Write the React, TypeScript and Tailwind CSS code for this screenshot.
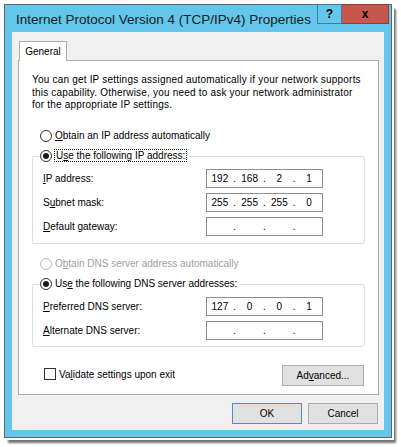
import React from "react";

const Radio = ({ checked, disabled }: { checked?: boolean; disabled?: boolean }) => (
  <span
    className={`flex items-center justify-center w-[12px] h-[12px] rounded-full border bg-white ${
      disabled ? "border-[#bcbcbc]" : "border-[#333333]"
    }`}
  >
    {checked && <span className="w-[6px] h-[6px] rounded-full bg-[#1a1a1a]" />}
  </span>
);

const IpBox = ({ parts }: { parts: string[] }) => (
  <div className="flex items-center w-[117px] h-[19px] border border-[#8f8f8f] bg-white text-[10px]">
    {parts.map((p, i) => (
      <React.Fragment key={i}>
        {i > 0 && <span className="w-[4px] text-center">.</span>}
        <span className="flex-1 text-center">{p}</span>
      </React.Fragment>
    ))}
  </div>
);

const Row = ({ label, parts }: { label: React.ReactNode; parts: string[] }) => (
  <div className="flex items-center">
    <span className="w-[173px] pl-[10px]">{label}</span>
    <IpBox parts={parts} />
  </div>
);

const Btn = ({ children, primary, w }: { children: React.ReactNode; primary?: boolean; w: string }) => (
  <div
    className={`flex items-center justify-center h-[21px] bg-[#e1e1e1] border ${w} ${
      primary ? "border-[#4a8ed0]" : "border-[#adadad]"
    }`}
  >
    {children}
  </div>
);

export default function App() {
  return (
    <div className="w-[401px] h-[447px] bg-white pt-[4px] pl-[4px] text-[10px] text-black font-['Liberation_Sans',Arial,sans-serif]">
      <div className="w-[388px] h-[434px] border border-[#5b6670] bg-[#63c6ea] flex flex-col px-[7px] pb-[7px] shadow-[0_0_0_2px_#ffffff,4px_5px_2px_rgba(0,0,0,0.55)]">
        {/* title bar */}
        <div className="h-[27px] flex items-start justify-between">
          <span className="mt-[5px] pl-[4px] text-[13.5px] leading-[20px] whitespace-nowrap text-[#1b1b1b]">
            Internet Protocol Version 4 (TCP/IPv4) Properties
          </span>
          <div className="flex -mt-[1px] -mr-[5px]">
            <div className="w-[25px] h-[20px] border border-[#3f7f9c] bg-[#63c6ea] flex items-center justify-center text-[12px] font-bold">
              ?
            </div>
            <div className="w-[47px] h-[20px] border border-[#9b3a33] border-l-0 bg-[#c7564c] flex items-center justify-center text-[12px] font-bold">
              x
            </div>
          </div>
        </div>

        {/* client area */}
        <div className="flex-1 bg-[#f0f0f0] pt-[9px] flex flex-col">
          <div className="ml-[7px] w-[48px] h-[20px] border border-b-0 border-[#adadad] bg-white flex items-center justify-center relative z-10 -mb-[1px]">
            General
          </div>
          <div className="ml-[6px] w-[361px] h-[335px] border border-[#adadad] bg-white px-[13px] flex flex-col">
            <p className="mt-[13px] leading-[12.5px] whitespace-nowrap tracking-[0.2px]">
              You can get IP settings assigned automatically if your network supports
              <br />
              this capability. Otherwise, you need to ask your network administrator
              <br />
              for the appropriate IP settings.
            </p>

            <div className="mt-[16px] h-[16px] pl-[8px] flex items-center gap-[3px]">
              <Radio />
              <span>
                <u>O</u>btain an IP address automatically
              </span>
            </div>

            <div className="mt-[4px] flex flex-col">
              <div className="h-[16px] pl-[8px] flex items-center relative z-10">
                <div className="flex items-center gap-[2px] bg-white pr-[1px]">
                  <Radio checked />
                  <span className="border border-dotted border-[#222] px-[1px] leading-[11px]">
                    U<u>s</u>e the following IP address:
                  </span>
                </div>
              </div>
              <div className="-mt-[8px] h-[88px] border border-[#dcdcdc] rounded-[3px] pt-[12px] flex flex-col gap-[5px]">
                <Row label={<><u>I</u>P address:</>} parts={["192", "168", "2", "1"]} />
                <Row label={<>S<u>u</u>bnet mask:</>} parts={["255", "255", "255", "0"]} />
                <Row label={<><u>D</u>efault gateway:</>} parts={["", "", "", ""]} />
              </div>
            </div>

            <div className="mt-[12px] h-[16px] pl-[8px] flex items-center gap-[3px] text-[#a0a0a0]">
              <Radio disabled />
              <span>
                O<u>b</u>tain DNS server address automatically
              </span>
            </div>

            <div className="mt-[4px] flex flex-col">
              <div className="h-[16px] pl-[8px] flex items-center relative z-10">
                <div className="flex items-center gap-[3px] bg-white pr-[3px]">
                  <Radio checked />
                  <span>
                    Us<u>e</u> the following DNS server addresses:
                  </span>
                </div>
              </div>
              <div className="-mt-[8px] h-[63px] border border-[#dcdcdc] rounded-[3px] pt-[12px] flex flex-col gap-[5px]">
                <Row label={<><u>P</u>referred DNS server:</>} parts={["127", "0", "0", "1"]} />
                <Row label={<><u>A</u>lternate DNS server:</>} parts={["", "", "", ""]} />
              </div>
            </div>

            <div className="mt-[18px] flex items-start justify-between">
              <div className="pl-[12px] mt-[2px] flex items-center gap-[3px]">
                <span className="w-[12px] h-[12px] border border-[#333333] bg-white" />
                <span>
                  Va<u>l</u>idate settings upon exit
                </span>
              </div>
              <div className="mr-[1px]">
                <Btn w="w-[82px]">
                  Ad<u>v</u>anced...
                </Btn>
              </div>
            </div>
          </div>

          <div className="mt-[8px] flex justify-end gap-[6px] mr-[6px]">
            <Btn primary w="w-[70px]">
              OK
            </Btn>
            <Btn w="w-[70px]">Cancel</Btn>
          </div>
        </div>
      </div>
    </div>
  );
}
